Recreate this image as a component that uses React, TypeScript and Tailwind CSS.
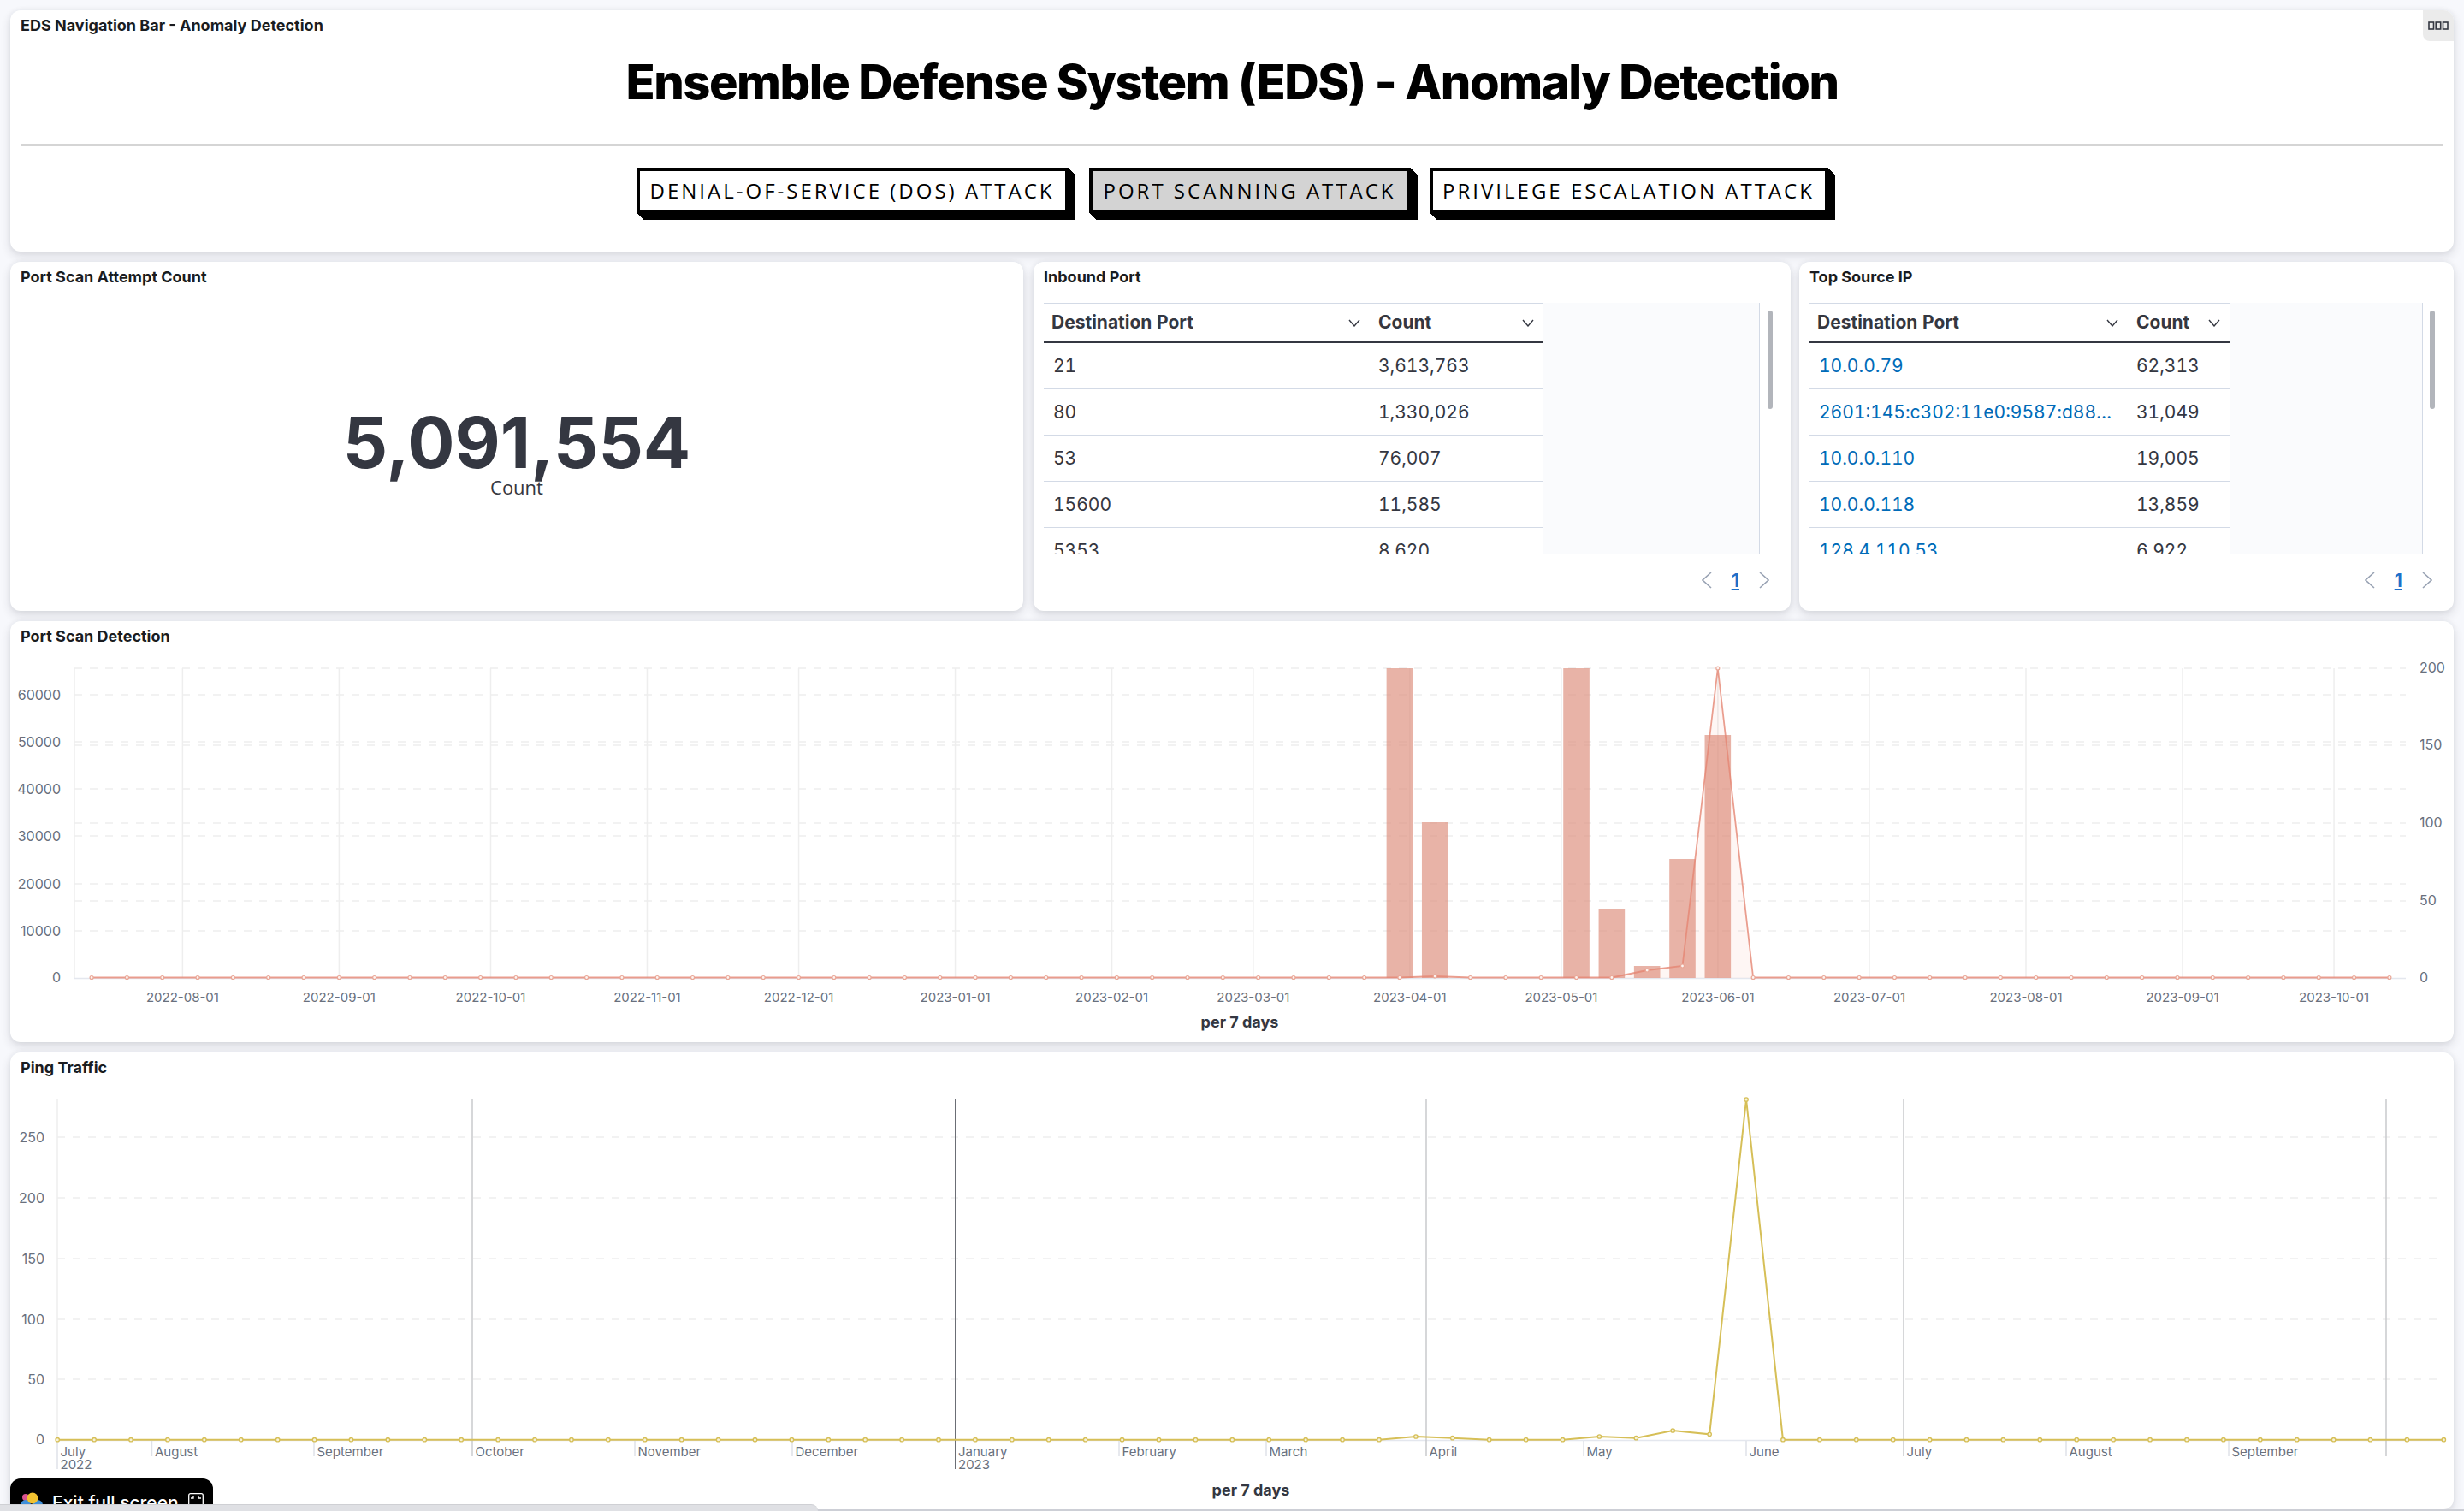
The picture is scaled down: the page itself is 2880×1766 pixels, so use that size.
import React from 'react';

const INK = '#343741';
const AXIS = '#69707d';
const GRID = '#eeeeee';

const range = (n: number) => Array.from({ length: n }, (_, i) => i);

const BTN_SHADOW =
  'shadow-[1px_1px_0_#000,2px_2px_0_#000,3px_3px_0_#000,4px_4px_0_#000,5px_5px_0_#000,6px_6px_0_#000,7px_7px_0_#000,8px_8px_0_#000]';

const Panel: React.FC<{ title: string; className: string; children: React.ReactNode }> = ({ title, className, children }) => (
  <div className={`relative bg-white rounded-xl shadow-[0_5px_12px_rgba(40,45,60,0.14),0_0_6px_rgba(40,45,60,0.06)] ${className}`}>
    <div className="h-[48px] pl-[12px] pt-[8px] text-[18px] leading-[20px] font-bold text-[#1a1c21]">{title}</div>
    {children}
  </div>
);

const NavButton: React.FC<{ label: string; active?: boolean; className: string }> = ({ label, active, className }) => (
  <button
    className={`h-[53px] border-[4px] border-black text-[24px] tracking-[3px] text-black font-['Open_Sans',sans-serif] ${BTN_SHADOW} ${active ? 'bg-[#d3d3d3]' : 'bg-white'} ${className}`}
  >
    {label}
  </button>
);

const HeaderCaret = () => (
  <svg width="14" height="9" viewBox="0 0 14 9" fill="none" stroke={INK} strokeWidth="1.4">
    <polyline points="1,1 7,8 13,1" />
  </svg>
);

const PageChevron: React.FC<{ flip?: boolean }> = ({ flip }) => (
  <svg width="12" height="20" viewBox="0 0 12 20" fill="none" stroke="#98a2b3" strokeWidth="1.6">
    <polyline points={flip ? '1,1 11,10 1,19' : '11,1 1,10 11,19'} />
  </svg>
);

type Row = [string, string];

const DataTable: React.FC<{
  rows: Row[];
  link?: boolean;
  gridClass: string;
  tableWidth: string;
  thumbMargin: string;
}> = ({ rows, link, gridClass, tableWidth, thumbMargin }) => (
  <div className="px-[12px]">
    <div className="flex h-[294px] border-b border-[#d3dae6] overflow-hidden">
      <div className={`${tableWidth} shrink-0 text-[21px] text-[#343741] tabular-nums`}>
        <div className={`grid ${gridClass} h-[47px] border-t border-t-[#d3dae6] border-b-[2px] border-b-[#343741] font-bold`}>
          <div className="flex items-center justify-between pl-[9px] pr-[10px]">
            <span>Destination Port</span>
            <HeaderCaret />
          </div>
          <div className="flex items-center justify-between pl-[11px] pr-[11px]">
            <span>Count</span>
            <HeaderCaret />
          </div>
        </div>
        {rows.map(([key, count]) => (
          <div key={key} className={`grid ${gridClass} h-[54px] border-b border-[#d3dae6] items-center`}>
            <div className={`pl-[11px] whitespace-nowrap ${link ? 'text-[#006bb8]' : ''}`}>{key}</div>
            <div className="pl-[11px]">{count}</div>
          </div>
        ))}
      </div>
      <div className="flex-1 bg-[#fafbfd] border-r border-[#d3dae6]" />
      <div className="w-[24px]">
        <div className={`w-[6px] h-[115px] mt-[9px] rounded-full bg-[#b2b5bb] ${thumbMargin}`} />
      </div>
    </div>
    <div className="h-[60px] flex items-center justify-end gap-[23px] pr-[13px]">
      <PageChevron />
      <span className="text-[22px] font-semibold text-[#1f6fc9] underline underline-offset-2">1</span>
      <PageChevron flip />
    </div>
  </div>
);

const inbound: Row[] = [
  ['21', '3,613,763'],
  ['80', '1,330,026'],
  ['53', '76,007'],
  ['15600', '11,585'],
  ['5353', '8,620'],
];

const sources: Row[] = [
  ['10.0.0.79', '62,313'],
  ['2601:145:c302:11e0:9587:d88…', '31,049'],
  ['10.0.0.110', '19,005'],
  ['10.0.0.118', '13,859'],
  ['128.4.110.53', '6,922'],
];

const fontProps = { fontFamily: 'Inter, sans-serif', fontSize: 16, fill: AXIS };
const tickFont = { fontFamily: 'Inter, sans-serif', fontSize: 15, fill: AXIS };
const titleFont = { fontFamily: 'Inter, sans-serif', fontSize: 18, fontWeight: 700, fill: INK };

// Port scan chart, drawn in page coordinates
const dayX = (d: number) => 213.4 + d * 5.903;
const scanTicks: [string, number][] = [
  ['2022-08-01', 0],
  ['2022-09-01', 31],
  ['2022-10-01', 61],
  ['2022-11-01', 92],
  ['2022-12-01', 122],
  ['2023-01-01', 153],
  ['2023-02-01', 184],
  ['2023-03-01', 212],
  ['2023-04-01', 243],
  ['2023-05-01', 273],
  ['2023-06-01', 304],
  ['2023-07-01', 334],
  ['2023-08-01', 365],
  ['2023-09-01', 396],
  ['2023-10-01', 426],
];
const scanX = (i: number) => 107.1 + 41.32 * i;
const scanBars: [number, number][] = [
  [37, 781],
  [38, 961],
  [42, 781],
  [43, 1062],
  [44, 1129],
  [45, 1004],
  [46, 859],
];
const scanLine: Record<number, number> = { 38: 1141, 44: 1134, 45: 1129, 46: 781 };
const scanPts = range(66).map((i) => [scanX(i), scanLine[i] ?? 1142.5] as const);

const ScanChart = () => (
  <svg width="2856" height="444" viewBox="12 774 2856 444" className="block">
    {[812, 867, 922, 977, 1033, 1088, 781, 871, 962, 1053].map((y) => (
      <line key={y} x1="87" x2="2812" y1={y} y2={y} stroke={GRID} strokeWidth="1.5" strokeDasharray="9 9" />
    ))}
    <line x1="87" x2="87" y1="781" y2="1143" stroke={GRID} strokeWidth="1.5" />
    {scanTicks.map(([, d]) => (
      <line key={d} x1={dayX(d)} x2={dayX(d)} y1="781" y2="1143" stroke={GRID} strokeWidth="1.5" />
    ))}
    <line x1="87" x2="2812" y1="1143.5" y2="1143.5" stroke="#e4e7ee" strokeWidth="1.5" />
    {scanBars.map(([i, top]) => (
      <rect key={i} x={scanX(i) - 15.3} y={top} width="30.6" height={1143 - top} fill="#dc8a78" opacity="0.65" />
    ))}
    <polygon
      points={`${scanX(0)},1143 ${scanPts.map(([x, y]) => `${x},${y}`).join(' ')} ${scanX(65)},1143`}
      fill="#e7664c"
      opacity="0.06"
    />
    <polyline points={scanPts.map(([x, y]) => `${x},${y}`).join(' ')} fill="none" stroke="#e58673" strokeWidth="1.8" opacity="0.8" />
    {scanPts.map(([x, y]) => (
      <circle key={x} cx={x} cy={y} r="2" fill="#fdf3f0" stroke="#e9a797" strokeWidth="1.2" />
    ))}
    {[
      ['60000', 812],
      ['50000', 867],
      ['40000', 922],
      ['30000', 977],
      ['20000', 1033],
      ['10000', 1088],
      ['0', 1142],
    ].map(([t, y]) => (
      <text key={t} x="71" y={Number(y) + 6} textAnchor="end" {...fontProps}>
        {t}
      </text>
    ))}
    {[
      ['200', 780],
      ['150', 870],
      ['100', 961],
      ['50', 1052],
      ['0', 1142],
    ].map(([t, y]) => (
      <text key={t} x="2828" y={Number(y) + 6} {...fontProps}>
        {t}
      </text>
    ))}
    {scanTicks.map(([t, d]) => (
      <text key={t} x={dayX(d)} y="1171" textAnchor="middle" {...tickFont}>
        {t}
      </text>
    ))}
    <text x="1449" y="1201" textAnchor="middle" {...titleFont}>
      per 7 days
    </text>
  </svg>
);

// Ping chart
const pingX = (i: number) => 67.2 + 42.91 * i;
const pingLine: Record<number, number> = { 37: 1679, 38: 1680.7, 42: 1679, 43: 1680.7, 44: 1672, 45: 1676.3, 46: 1285 };
const pingPts = range(66).map((i) => [pingX(i), pingLine[i] ?? 1682.7] as const);

const pingTicks: { x: number; label: string; year?: string; strong?: boolean; tall?: boolean }[] = [
  { x: 67, label: 'July', year: '2022' },
  { x: 177.5, label: 'August' },
  { x: 367, label: 'September' },
  { x: 552, label: 'October', tall: true },
  { x: 742, label: 'November' },
  { x: 926, label: 'December' },
  { x: 1116.5, label: 'January', year: '2023', tall: true, strong: true },
  { x: 1308, label: 'February' },
  { x: 1480, label: 'March' },
  { x: 1667, label: 'April', tall: true },
  { x: 1851, label: 'May' },
  { x: 2041, label: 'June' },
  { x: 2225, label: 'July', tall: true },
  { x: 2415, label: 'August' },
  { x: 2605, label: 'September' },
  { x: 2789, label: '', tall: true },
];

const PingChart = () => (
  <svg width="2856" height="486" viewBox="12 1278 2856 486" className="block">
    {[1329, 1400, 1471, 1542, 1612].map((y) => (
      <line key={y} x1="67" x2="2857" y1={y} y2={y} stroke={GRID} strokeWidth="1.5" strokeDasharray="9 9" />
    ))}
    <line x1="67" x2="2857" y1="1683.5" y2="1683.5" stroke="#e4e7ee" strokeWidth="1.5" />
    {pingTicks.map((t) => (
      <line
        key={t.x}
        x1={t.x}
        x2={t.x}
        y1={t.tall ? 1285 : 1684}
        y2={t.year ? 1717 : 1702}
        stroke={t.strong ? '#6b6e75' : t.tall ? '#c9cacc' : '#dfe2e8'}
        strokeWidth={t.strong ? 1 : 1.5}
      />
    ))}
    <line x1="67" x2="67" y1="1285" y2="1684" stroke={GRID} strokeWidth="1.5" />
    <polyline points={pingPts.map(([x, y]) => `${x},${y}`).join(' ')} fill="none" stroke="#d6bf57" strokeWidth="2" />
    {pingPts.map(([x, y]) => (
      <circle key={x} cx={x} cy={y} r="2.2" fill="#f8f3d8" stroke="#d6bf57" strokeWidth="1.3" />
    ))}
    {[
      ['250', 1329],
      ['200', 1400],
      ['150', 1471],
      ['100', 1542],
      ['50', 1612],
      ['0', 1682],
    ].map(([t, y]) => (
      <text key={t} x="52" y={Number(y) + 5.5} textAnchor="end" {...fontProps}>
        {t}
      </text>
    ))}
    {pingTicks.map((t) => (
      <text key={t.x} x={t.x + 3.5} y="1702" {...tickFont}>
        {t.label}
        {t.year && (
          <tspan x={t.x + 3.5} dy="15">
            {t.year}
          </tspan>
        )}
      </text>
    ))}
    <text x="1462" y="1748" textAnchor="middle" {...titleFont}>
      per 7 days
    </text>
  </svg>
);

const App: React.FC = () => (
  <div className="relative w-[2880px] h-[1766px] overflow-hidden bg-[#f7f8fc] px-[12px] pt-[12px] flex flex-col gap-[12px] font-['Inter',sans-serif]">
    {/* Navigation */}
    <Panel title="EDS Navigation Bar - Anomaly Detection" className="h-[282px] shrink-0">
      <div className="absolute right-0 top-0 w-[36px] h-[36px] bg-[#ebebeb] rounded-bl-lg rounded-tr-xl flex items-center justify-center">
        <svg width="24" height="10" viewBox="0 0 24 10" fill="none" stroke="#343741" strokeWidth="1.6">
          <rect x="1" y="1" width="5.5" height="8" />
          <rect x="9.2" y="1" width="5.5" height="8" />
          <rect x="17.5" y="1" width="5.5" height="8" />
        </svg>
      </div>
      <h1 className="h-[72px] text-center text-[56px] leading-[72px] tracking-[-1.45px] font-extrabold text-black">
        Ensemble Defense System (EDS) - Anomaly Detection
      </h1>
      <div className="mx-[12px] mt-[36px] h-[3px] bg-[#d5d5d5]" />
      <div className="mt-[25px] flex justify-center">
        <NavButton label="DENIAL-OF-SERVICE (DOS) ATTACK" className="w-[505px] mr-[24px]" />
        <NavButton label="PORT SCANNING ATTACK" active className="w-[376px] mr-[22px]" />
        <NavButton label="PRIVILEGE ESCALATION ATTACK" className="w-[466px]" />
      </div>
    </Panel>

    {/* Metric and tables */}
    <div className="flex h-[408px] shrink-0">
      <Panel title="Port Scan Attempt Count" className="w-[1184px] mr-[12px]">
        <div className="mt-[122px] text-center text-[82px] leading-[84px] font-bold text-[#343741]">5,091,554</div>
        <div className="mt-[-4px] text-center text-[22px] leading-[26px] text-[#343741] font-['Open_Sans',sans-serif]">Count</div>
      </Panel>
      <Panel title="Inbound Port" className="w-[885px] mr-[10px]">
        <DataTable rows={inbound} gridClass="grid-cols-[380px_204px]" tableWidth="w-[584px]" thumbMargin="ml-[9px]" />
      </Panel>
      <Panel title="Top Source IP" className="w-[765px]">
        <DataTable rows={sources} link gridClass="grid-cols-[371px_120px]" tableWidth="w-[491px]" thumbMargin="ml-[8px]" />
      </Panel>
    </div>

    <Panel title="Port Scan Detection" className="h-[492px] shrink-0">
      <ScanChart />
    </Panel>

    <Panel title="Ping Traffic" className="h-[534px] shrink-0">
      <PingChart />
    </Panel>

    {/* Browser full screen overlay, cut off by the window edge */}
    <div className="absolute left-[12px] top-[1728px] w-[237px] h-[38px] bg-black rounded-t-xl flex items-start pl-[12px] pt-[16px] gap-[11px] text-white text-[21px] leading-[26px] font-medium">
      <svg width="26" height="24" viewBox="0 0 26 24" className="shrink-0">
        <circle cx="6" cy="6" r="4" fill="#d9538f" />
        <circle cx="6" cy="15" r="6" fill="#3f8fd8" />
        <circle cx="20" cy="15" r="6" fill="#3f8fd8" />
        <circle cx="14" cy="7" r="6.5" fill="#f2c230" />
      </svg>
      <span className="whitespace-nowrap">Exit full screen</span>
      <svg width="18" height="18" viewBox="0 0 18 18" fill="none" stroke="#fff" strokeWidth="1.3" className="shrink-0 mt-[1px]">
        <rect x="0.7" y="0.7" width="16.6" height="16.6" rx="2" />
        <path d="M6 3v3H3M12 3v3h3" />
      </svg>
    </div>
    <div className="absolute left-0 top-[1758px] w-[956px] h-[8px] bg-[#dfe0e4] border-t border-[#cfd0d4] rounded-tr-xl" />
    <div className="absolute left-[956px] right-0 top-[1764px] h-[2px] bg-[#cdcfd6]" />
  </div>
);

export default App;
